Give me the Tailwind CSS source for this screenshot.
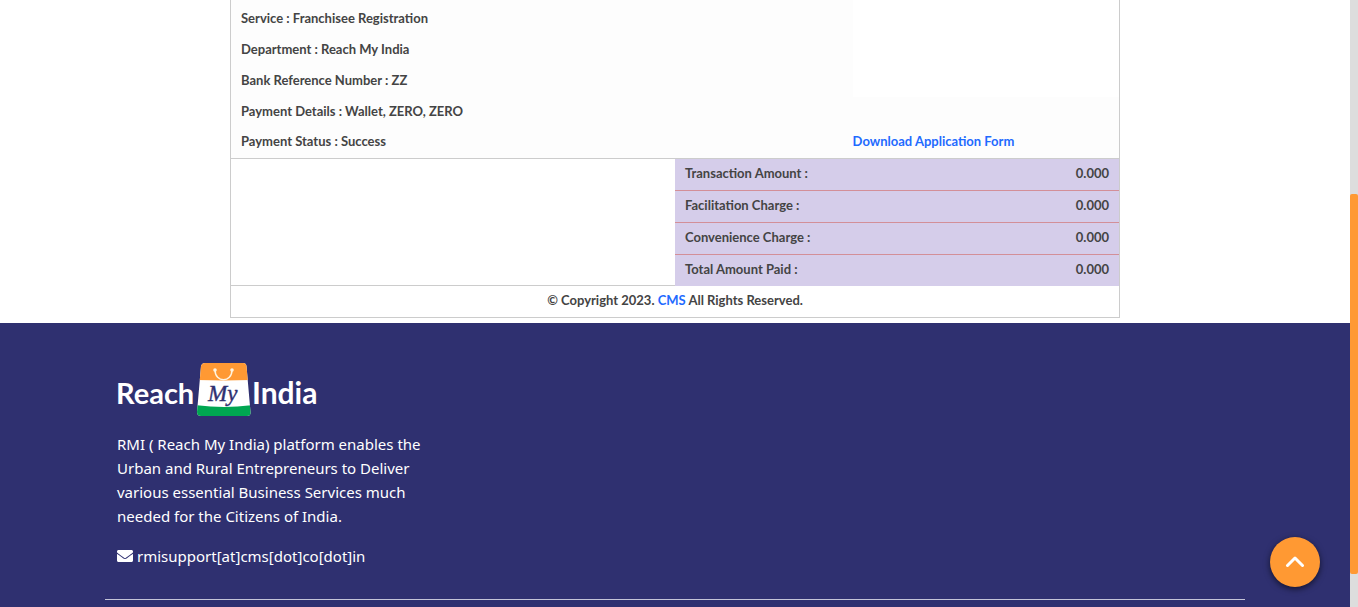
<!DOCTYPE html>
<html lang="en">
<head>
<meta charset="utf-8">
<meta name="viewport" content="width=device-width, initial-scale=1">
<title>Reach My India</title>
<script src="https://cdn.jsdelivr.net/npm/@tailwindcss/browser@4"></script>
</head>
<body class="flex min-h-screen bg-white">
<div class="flex min-w-0 flex-1 flex-col">
  <main class="mx-auto mb-[5px] w-full max-w-[890px] border border-t-0 border-[#ccc] font-['Lato',sans-serif] text-[13px] leading-[29px] font-bold text-[#444]">
    <section class="flex border-b border-[#ccc] bg-[#fdfdfd]">
      <div class="w-[70%] pt-1 pb-[2px] pl-[10px]">
        <p class="pb-[2px]">Service : Franchisee Registration</p>
        <p class="pb-[2px]">Department : Reach My India</p>
        <p class="pb-[2px]">Bank Reference Number : ZZ</p>
        <p class="pb-px">Payment Details : Wallet, ZERO, ZERO</p>
        <p>Payment Status : Success</p>
      </div>
      <div class="flex flex-1 flex-col pb-[2px]">
        <div class="mb-[30px] flex-1 bg-white"></div>
        <a href="#" class="text-[#1f6bff]">Download Application Form</a>
      </div>
    </section>
    <section class="flex">
      <div class="w-1/2 border-b border-[#ccc]"></div>
      <table class="w-1/2 border-collapse bg-[#d5cdea]">
        <tbody>
          <tr class="border-b border-[#d38f98]"><th scope="row" class="pb-[2px] pl-[10px] text-left">Transaction Amount :</th><td class="pr-[10px] pb-[2px] text-right">0.000</td></tr>
          <tr class="border-b border-[#d38f98]"><th scope="row" class="pb-[2px] pl-[10px] text-left">Facilitation Charge :</th><td class="pr-[10px] pb-[2px] text-right">0.000</td></tr>
          <tr class="border-b border-[#d38f98]"><th scope="row" class="pb-[2px] pl-[10px] text-left">Convenience Charge :</th><td class="pr-[10px] pb-[2px] text-right">0.000</td></tr>
          <tr><th scope="row" class="pb-[2px] pl-[10px] text-left">Total Amount Paid :</th><td class="pr-[10px] pb-[2px] text-right">0.000</td></tr>
        </tbody>
      </table>
    </section>
    <p class="pb-[2px] text-center">© Copyright 2023. <a href="#" class="text-[#1f6bff]">CMS</a> All Rights Reserved.</p>
  </main>
  <footer class="flex-1 bg-[#2f3070] pt-10 font-['Noto_Sans',sans-serif] text-[15px] leading-6 text-white">
    <div class="mx-auto max-w-[1140px] border-b border-[#c4c4d8] px-3 pb-[31px]">
      <svg class="h-[54px] w-[202px]" viewBox="0 0 202 54" role="img" aria-label="Reach My India">
        <defs><clipPath id="bag"><path d="M88 0H126Q129 0 129.500 3L133.500 49Q134 53 130 53H84Q80 53 80 49L84 3Q85 0 88 0Z"/></clipPath></defs>
        <g clip-path="url(#bag)">
          <path fill="#fff" d="M78 0H136V54H78Z"/>
          <path fill="#ff9933" d="M78 0H136V17Q107 18 78 17Z"/>
          <path fill="#00a651" d="M78 42Q107 46 136 42V54H78Z"/>
        </g>
        <path d="M98 7C98 20 115 20 115 7" fill="none" stroke="#fff4df" stroke-width="1.500"/>
        <circle cx="98" cy="7" r="1.800" fill="#fff4df"/><circle cx="115" cy="7" r="1.800" fill="#fff4df"/>
        <text x="-1" y="41" fill="#fff" class="font-['Lato',sans-serif] text-[29px] font-bold">Reach</text>
        <text x="91" y="38" fill="#2f3070" stroke="#2f3070" stroke-width="0.400" class="font-['Liberation_Serif',serif] text-[23px] italic">My</text>
        <text x="135" y="41" fill="#fff" class="font-['Lato',sans-serif] text-[30px] font-bold">India</text>
      </svg>
      <p class="mt-[15px] max-w-[320px]">RMI ( Reach My India) platform enables the Urban and Rural Entrepreneurs to Deliver various essential Business Services much needed for the Citizens of India.</p>
      <p class="mt-4 flex items-center gap-1">
        <svg class="size-4" viewBox="0 0 512 512" fill="currentColor" aria-hidden="true"><path d="M502.300 190.800c3.900-3.100 9.700-.2 9.700 4.700V400c0 26.500-21.500 48-48 48H48c-26.500 0-48-21.500-48-48V195.600c0-5 5.700-7.800 9.700-4.700 22.400 17.400 52.100 39.500 154.100 113.600 21.100 15.400 56.700 47.800 92.200 47.600 35.700.3 72-32.800 92.300-47.600 102-74.100 131.600-96.300 154-113.700zM256 320c23.200.4 56.600-29.200 73.400-41.400 132.700-96.300 142.800-104.700 173.400-128.700 5.800-4.500 9.200-11.500 9.200-18.900v-19c0-26.500-21.500-48-48-48H48c-26.500 0-48 21.500-48 48v19c0 7.400 3.400 14.300 9.200 18.900 30.600 23.900 40.700 32.400 173.400 128.700 16.800 12.200 50.200 41.800 73.400 41.400z"/></svg>
        rmisupport[at]cms[dot]co[dot]in
      </p>
    </div>
  </footer>
</div>
<div class="flex w-2 shrink-0 flex-col bg-[#ddd]" aria-hidden="true">
  <div class="h-[194px]"></div>
  <div class="h-[380px] rounded-xs bg-[#ff9933]"></div>
</div>
<button type="button" aria-label="Back to top" class="fixed right-[38px] bottom-5 flex size-[50px] items-center justify-center rounded-full bg-[#ff9933] shadow-[0_2px_6px_rgba(0,0,0,0.6)]">
  <svg class="h-3 w-5" viewBox="0 0 20 12" fill="none" stroke="#fff" stroke-width="3" stroke-linecap="round" stroke-linejoin="round" aria-hidden="true"><path d="M2.500 9.500L10 2L17.500 9.500"/></svg>
</button>
</body>
</html>
